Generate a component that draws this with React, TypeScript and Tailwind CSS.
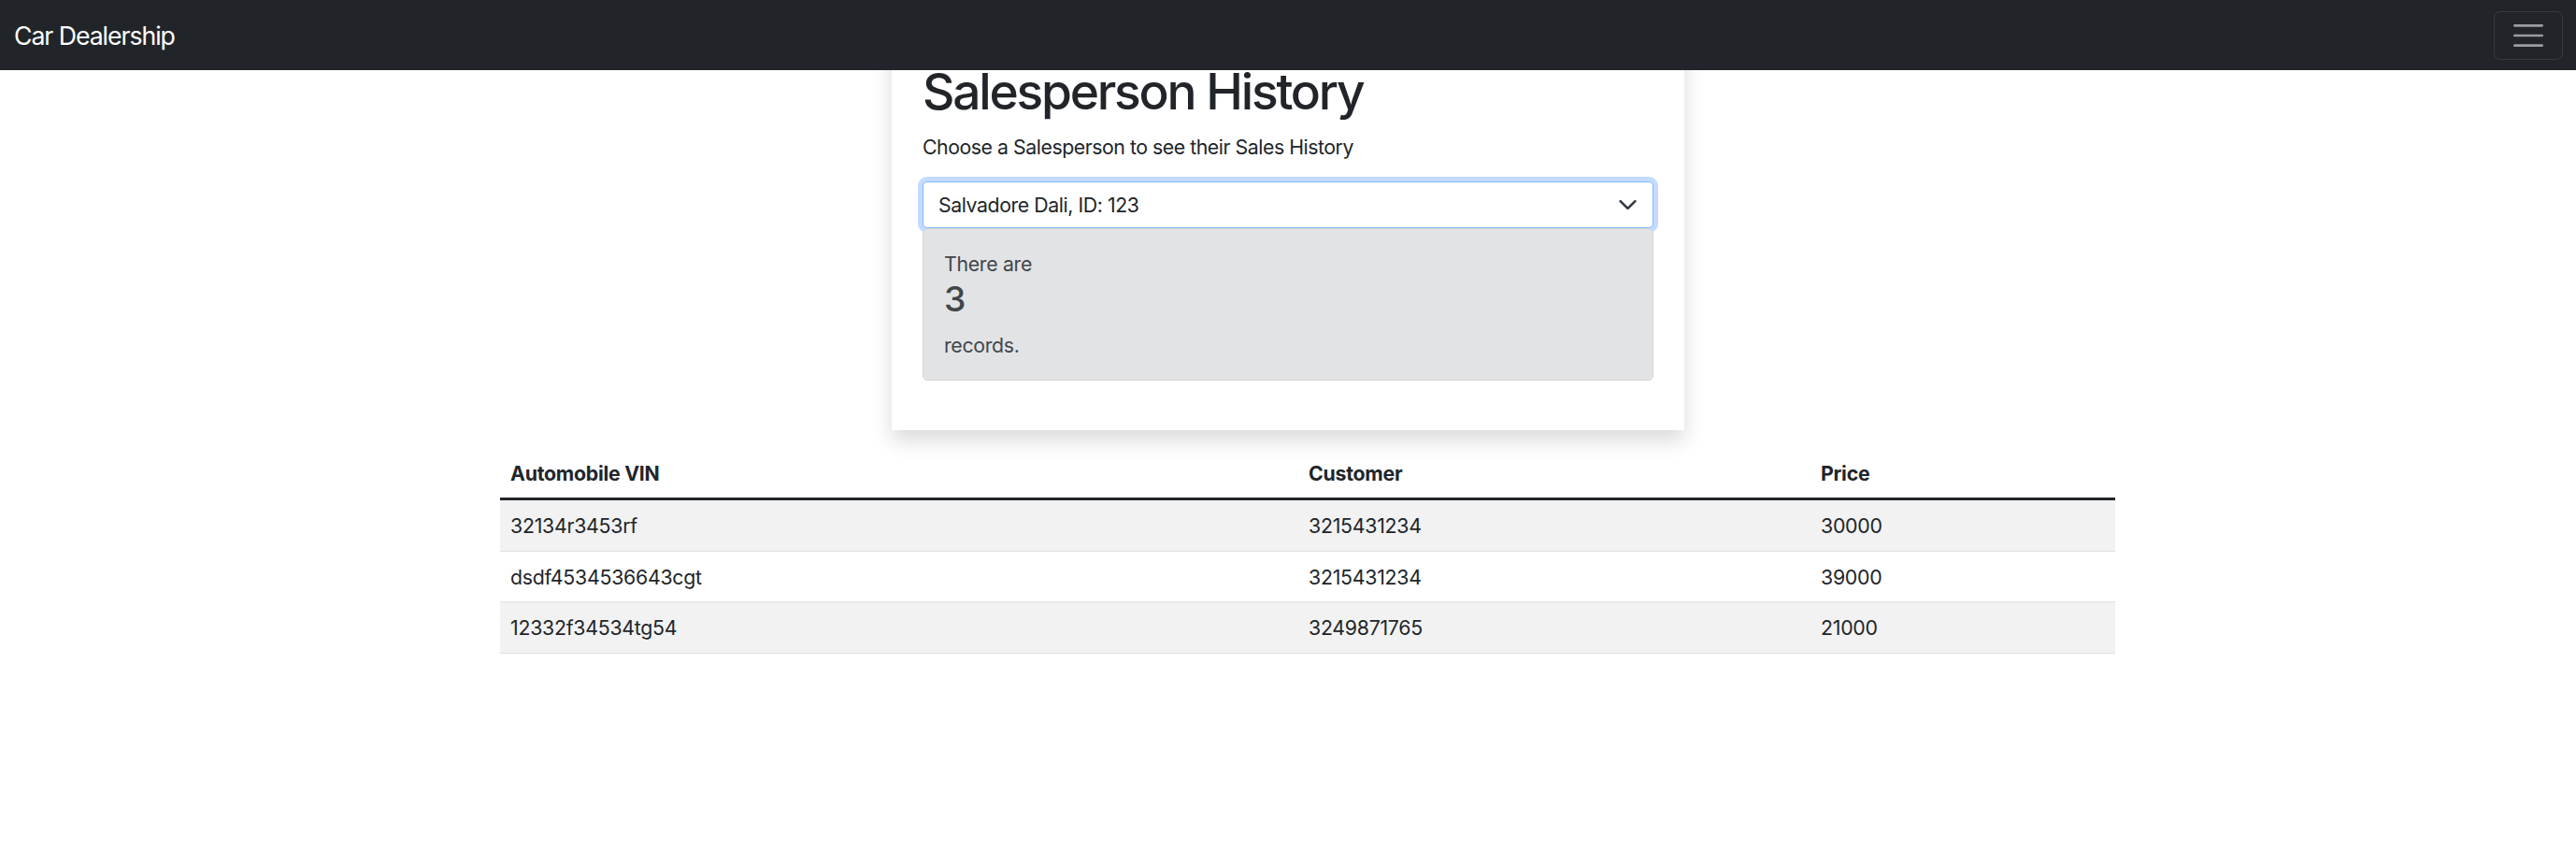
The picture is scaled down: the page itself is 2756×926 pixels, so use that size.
const sales = [
  { vin: "32134r3453rf", customer: "3215431234", price: 30000 },
  { vin: "dsdf4534536643cgt", customer: "3215431234", price: 39000 },
  { vin: "12332f34534tg54", customer: "3249871765", price: 21000 },
];

const Navbar = () => (
  <nav className="relative z-10 flex h-[75px] items-center justify-between bg-[#212529] pl-[15px] pr-[14px]">
    <span className="text-[26.7px] leading-[40px] tracking-[-0.04em] text-white">Car Dealership</span>
    <button className="flex h-[52px] w-[74px] items-center justify-center rounded-[7px] border-[1.3px] border-white/10">
      <svg width="40" height="40" viewBox="0 0 30 30" fill="none">
        <path
          d="M4 7h22M4 15h22M4 23h22"
          stroke="rgba(255,255,255,0.55)"
          strokeWidth="2"
          strokeLinecap="round"
        />
      </svg>
    </button>
  </nav>
);

const App = () => {
  return (
    <div className="min-h-screen bg-white font-['Inter','Liberation_Sans',sans-serif] text-[#212529]">
      <Navbar />

      {/* card sits partly under the navbar */}
      <div className="mx-auto -mt-[41px] w-[848px] bg-white px-[33px] pt-[32px] pb-[53px] shadow-[0_11px_21px_rgba(0,0,0,0.15)]">
        <h1 className="mb-[10.7px] text-[53.3px] font-medium leading-[1.2] tracking-[-0.042em]">Salesperson History</h1>
        <p className="mb-[21px] text-[21.3px] leading-[32px] tracking-[-0.022em]">
          Choose a Salesperson to see their Sales History
        </p>

        <div className="flex h-[50px] items-center justify-between rounded-[5px] border-[1.3px] border-[#86b7fe] bg-white pl-[16px] pr-[16px] shadow-[0_0_0_5px_rgba(13,110,253,0.25)]">
          <span className="text-[21.3px] leading-[32px] tracking-[-0.02em]">Salvadore Dali, ID: 123</span>
          <svg width="21" height="16" viewBox="0 0 16 12" fill="none">
            <path d="m2 3 6 6 6-6" stroke="#343a40" strokeWidth="2" strokeLinecap="round" strokeLinejoin="round" />
          </svg>
        </div>

        <div className="rounded-[5px] border-[1.3px] border-[#d3d6d8] bg-[#e2e3e5] px-[22px] py-[21px] tracking-[-0.02em] text-[#41464b]">
          <div className="text-[21.3px] leading-[32px]">There are</div>
          <h3 className="mb-[10.7px] text-[37.3px] font-medium leading-[1.2]">3</h3>
          <div className="text-[21.3px] leading-[32px]">records.</div>
        </div>
      </div>

      <table className="mt-[19px] ml-[535px] w-[1728px] table-fixed border-collapse text-left text-[21.3px] leading-[32px] tracking-[-0.012em]">
        <thead>
          <tr className="border-b-[3px] border-[#212529]">
            <th className="w-[854px] px-[11px] py-[10.7px] font-bold">Automobile VIN</th>
            <th className="w-[548px] px-[11px] py-[10.7px] font-bold">Customer</th>
            <th className="px-[11px] py-[10.7px] font-bold">Price</th>
          </tr>
        </thead>
        <tbody>
          {sales.map((sale, i) => (
            <tr
              key={sale.vin}
              className={
                i % 2 === 0
                  ? "border-b-[1.3px] border-[#dee2e6] bg-[#f2f2f2]"
                  : "border-b-[1.3px] border-[#dee2e6] bg-white"
              }
            >
              <td className="px-[11px] py-[10.7px]">{sale.vin}</td>
              <td className="px-[11px] py-[10.7px]">{sale.customer}</td>
              <td className="px-[11px] py-[10.7px]">{sale.price}</td>
            </tr>
          ))}
        </tbody>
      </table>
    </div>
  );
};

export default App;
